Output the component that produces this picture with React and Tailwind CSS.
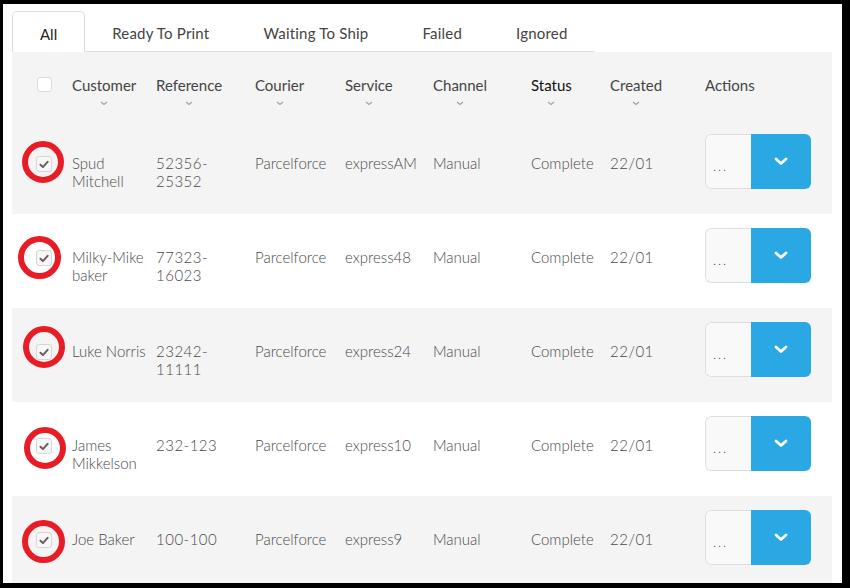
import React from 'react';

const tabs = ['All', 'Ready To Print', 'Waiting To Ship', 'Failed', 'Ignored'];

const columns = [
  { label: 'Customer', sort: true },
  { label: 'Reference', sort: true },
  { label: 'Courier', sort: true },
  { label: 'Service', sort: true },
  { label: 'Channel', sort: true },
  { label: 'Status', sort: true, dark: true },
  { label: 'Created', sort: true },
  { label: 'Actions', sort: false },
];

// ring: left/top relative to the row, s = outer diameter
const orders = [
  { customer: 'Spud\nMitchell', reference: '52356-\n25352', service: 'expressAM', ring: { x: 10, y: 21, s: 42 } },
  { customer: 'Milky-Mike\nbaker', reference: '77323-\n16023', service: 'express48', ring: { x: 6, y: 22, s: 43 } },
  { customer: 'Luke Norris', reference: '23242-\n11111', service: 'express24', ring: { x: 11, y: 18, s: 42 } },
  { customer: 'James\nMikkelson', reference: '232-123', service: 'express10', ring: { x: 12, y: 25, s: 42 } },
  { customer: 'Joe Baker', reference: '100-100', service: 'express9', ring: { x: 10, y: 24, s: 43 } },
];

const grid = 'grid grid-cols-[60px_84px_99px_90px_88px_98px_79px_95px_1fr]';

const SortChevron = () => (
  <svg width="8" height="5" viewBox="0 0 8 5" className="mt-[7px]">
    <path d="M1 1l3 2.5L7 1" fill="none" stroke="#a0a0a0" strokeWidth="1.1" />
  </svg>
);

const Check = () => (
  <svg width="10" height="9" viewBox="0 0 10 9">
    <path d="M1.5 4.8l2.4 2.3L8.6 1.8" fill="none" stroke="#6e5c5e" strokeWidth="2" strokeLinecap="round" strokeLinejoin="round" />
  </svg>
);

export default function App() {
  return (
    <div className="w-[850px] h-[588px] bg-black pt-[4px] pl-[3px]" style={{ fontFamily: 'Lato, "Open Sans", sans-serif' }}>
      <div className="w-[839px] h-[579px] bg-white overflow-hidden pl-[9px] pt-[7px]">
        {/* tabs */}
        <div className="flex w-fit h-[41px] border-b border-[#dddddd] text-[15px] leading-[18px] text-[#444]">
          {tabs.map((tab, i) => (
            <div
              key={tab}
              className={
                i === 0
                  ? 'shrink-0 whitespace-nowrap px-[27px] pt-[13px] -mb-px bg-white border border-b-0 border-[#dddddd] rounded-t-[5px] text-[#222]'
                  : 'shrink-0 whitespace-nowrap px-[27px] pt-[13px] tracking-[0.2px]'
              }
            >
              {tab}
            </div>
          ))}
        </div>

        <div className="w-[820px]">
          {/* header */}
          <div className={`${grid} h-[68px] bg-[#f4f4f4] text-[15px] leading-[18px]`}>
            <div className="pl-[25px] pt-[25px]">
              <div className="w-[15px] h-[15px] bg-white border border-[#dcdcdc] rounded-[3px]" />
            </div>
            {columns.map((col) => (
              <div key={col.label} className="pt-[24px]">
                <div className={`inline-flex flex-col items-center ${col.dark ? 'text-[#111]' : 'text-[#444]'}`}>
                  <span>{col.label}</span>
                  {col.sort && <SortChevron />}
                </div>
              </div>
            ))}
          </div>

          {/* rows */}
          {orders.map((o, i) => (
            <div
              key={i}
              className={`${grid} relative h-[94px] text-[15px] leading-[18px] font-light text-[#4a4a4a] ${i % 2 === 0 ? 'bg-[#f4f4f4]' : 'bg-white'}`}
            >
              <div className="pl-[24px] pt-[36px]">
                <div className="w-[16px] h-[16px] bg-[#f7f7f7] border border-[#d6d6d6] rounded-[3px] flex items-center justify-center">
                  <Check />
                </div>
              </div>
              <div className="pt-[34px] whitespace-pre-line">{o.customer}</div>
              <div className="pt-[34px] whitespace-pre-line tracking-[0.5px]">{o.reference}</div>
              <div className="pt-[34px]">Parcelforce</div>
              <div className="pt-[34px]">{o.service}</div>
              <div className="pt-[34px]">Manual</div>
              <div className="pt-[34px]">Complete</div>
              <div className="pt-[34px] tracking-[0.5px]">22/01</div>
              <div className="pt-[14px]">
                <div className="flex w-[106px] h-[55px] rounded-[6px] overflow-hidden">
                  <div className="w-[46px] h-full bg-[#f9f9f9] border border-r-0 border-[#dedede] rounded-l-[6px] flex items-center pl-[7px] pt-[8px] text-[#444] text-[13px] tracking-[2px]">
                    ...
                  </div>
                  <div className="flex-1 h-full bg-[#29a8e3] flex items-center justify-center">
                    <svg width="14" height="9" viewBox="0 0 14 9">
                      <path d="M2 2l5 4.5L12 2" fill="none" stroke="white" strokeWidth="2.8" strokeLinecap="round" strokeLinejoin="round" />
                    </svg>
                  </div>
                </div>
              </div>
              <div
                className="absolute rounded-full border-[6px] border-[#e81c24]"
                style={{ left: o.ring.x, top: o.ring.y, width: o.ring.s, height: o.ring.s }}
              />
            </div>
          ))}
        </div>
      </div>
    </div>
  );
}
